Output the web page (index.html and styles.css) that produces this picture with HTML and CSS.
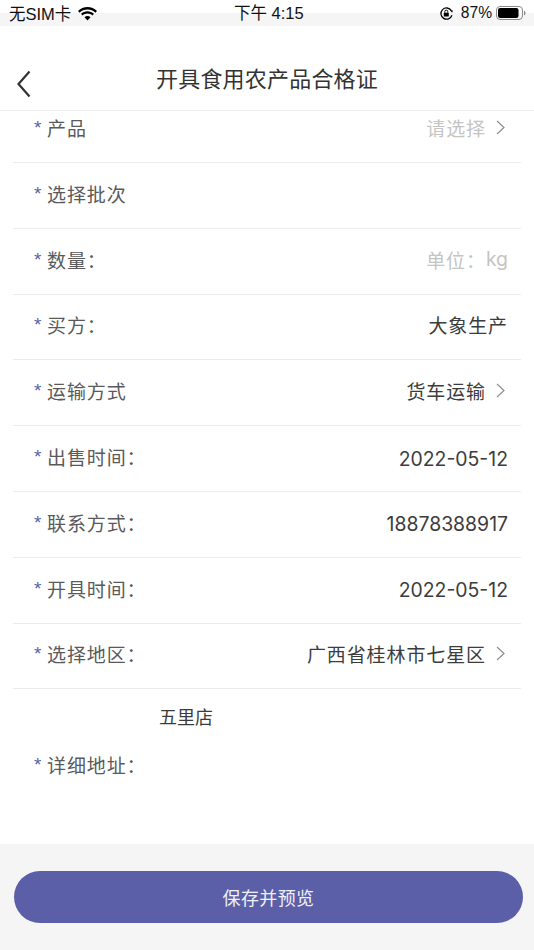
FILE: index.html
```html
<!DOCTYPE html>
<html lang="zh-CN">
<head>
  <meta charset="UTF-8">
  <meta name="viewport" content="width=device-width, initial-scale=1.0">
  <title>开具食用农产品合格证</title>
  <link rel="stylesheet" href="styles.css">
</head>
<body>
  <div class="page">
    <div class="status-bar">
      <div class="status-left">
        <span>无SIM卡</span>
        <svg class="wifi" width="21" height="15" viewBox="0 0 21 15">
          <path d="M10.5 3.6c3 0 5.8 1.1 7.9 3.1l1.6-1.7C17.4 2.500 14.100 1 10.500 1S3.600 2.500 1 5l1.600 1.700c2.100-2 4.900-3.100 7.900-3.100z" fill="#000"/>
          <path d="M10.500 7.600c1.900 0 3.600.7 4.900 1.900l1.600-1.700c-1.700-1.600-4-2.600-6.500-2.600S5.700 6.200 4 7.800l1.600 1.700c1.300-1.200 3-1.900 4.900-1.900z" fill="#000"/>
          <path d="M10.500 10c-1.200 0-2.200.4-3 1.200l3 3.300 3-3.300c-.8-.8-1.800-1.200-3-1.200z" fill="#000"/>
        </svg>
      </div>
      <div class="status-time">下午 4:15</div>
      <div class="status-right">
        <svg width="15" height="15" viewBox="0 0 15 15">
          <path d="M12.300 4.600A5.600 5.600 0 1 0 12.900 9.200" fill="none" stroke="#000" stroke-width="1.300"/>
          <path d="M11 4.200l3 .2-.9 2.300z" fill="#000"/>
          <rect x="4.800" y="6.800" width="5" height="3.800" rx=".6" fill="#000"/>
          <path d="M5.800 6.800V5.600a1.500 1.500 0 0 1 3 0v1.200" fill="none" stroke="#000"/>
        </svg>
        <span>87%</span>
        <svg width="30" height="14" viewBox="0 0 30 14">
          <rect x=".5" y=".5" width="26" height="13" rx="3.500" fill="none" stroke="#8a8a8a"/>
          <rect x="2" y="2" width="20.500" height="10" rx="2.200" fill="#000"/>
          <path d="M28 4.800c1 .3 1.500 1.100 1.500 2.200s-.5 1.900-1.500 2.200z" fill="#8a8a8a"/>
        </svg>
      </div>
    </div>

    <header class="nav">
      <svg class="back" width="14" height="28" viewBox="0 0 14 28">
        <path d="M12.500 1.500L1.500 14l11 12.500" fill="none" stroke="#333" stroke-width="2.200"/>
      </svg>
      <h1>开具食用农产品合格证</h1>
    </header>

    <main class="form">
      <div class="row row-first">
        <div class="label"><i>*</i>产品</div>
        <div class="value placeholder">请选择<svg class="chevron" width="9" height="15" viewBox="0 0 9 15"><path d="M1 1l7 6.500L1 14" fill="none" stroke="#8e8e8e" stroke-width="1.200"/></svg></div>
      </div>
      <div class="row">
        <div class="label"><i>*</i>选择批次</div>
      </div>
      <div class="row">
        <div class="label"><i>*</i>数量：</div>
        <div class="value placeholder">单位：<span class="num">kg</span></div>
      </div>
      <div class="row">
        <div class="label"><i>*</i>买方：</div>
        <div class="value">大象生产</div>
      </div>
      <div class="row">
        <div class="label"><i>*</i>运输方式</div>
        <div class="value">货车运输<svg class="chevron" width="9" height="15" viewBox="0 0 9 15"><path d="M1 1l7 6.500L1 14" fill="none" stroke="#8e8e8e" stroke-width="1.200"/></svg></div>
      </div>
      <div class="row">
        <div class="label"><i>*</i>出售时间：</div>
        <div class="value num">2022-05-12</div>
      </div>
      <div class="row">
        <div class="label"><i>*</i>联系方式：</div>
        <div class="value num">18878388917</div>
      </div>
      <div class="row">
        <div class="label"><i>*</i>开具时间：</div>
        <div class="value num">2022-05-12</div>
      </div>
      <div class="row">
        <div class="label"><i>*</i>选择地区：</div>
        <div class="value">广西省桂林市七星区<svg class="chevron" width="9" height="15" viewBox="0 0 9 15"><path d="M1 1l7 6.500L1 14" fill="none" stroke="#8e8e8e" stroke-width="1.200"/></svg></div>
      </div>
      <div class="address">
        <div class="label"><i>*</i>详细地址：</div>
        <div class="address-text">五里店</div>
      </div>
    </main>

    <footer class="footer">
      <button class="save">保存并预览</button>
    </footer>
  </div>
</body>
</html>
```

FILE: styles.css
```css
* {
  box-sizing: border-box;
}

body {
  margin: 0;
  background: #fff;
  font-family: "Liberation Sans", "Noto Sans CJK SC", sans-serif;
  color: #333;
}

.page {
  display: flex;
  flex-direction: column;
  height: 100vh;
  overflow: hidden;
}

/* status bar, grey band only starts halfway down */
.status-bar {
  position: relative;
  display: flex;
  justify-content: space-between;
  align-items: center;
  height: 26px;
  padding: 0 8px 0 9px;
  font-size: 16.500px;
  color: #111;
  background: linear-gradient(#fff 13px, #f5f5f5 13px);
}

.status-left,
.status-right {
  display: flex;
  align-items: center;
}

.wifi {
  margin-left: 6px;
}

.status-time {
  position: absolute;
  left: 234px;
  top: 0;
  line-height: 26px;
}

.status-right span {
  margin: 0 4px 0 7px;
  font-size: 15.600px;
}

.nav {
  display: flex;
  align-items: center;
  justify-content: center;
  position: relative;
  height: 85px;
  padding-top: 18px;
  border-bottom: 1px solid #eee;
}

.back {
  position: absolute;
  left: 17px;
  top: 44px;
}

.nav h1 {
  margin: 0;
  font-size: 22px;
  font-weight: 400;
  letter-spacing: .2px;
  color: #333;
}

.form {
  flex: 1;
  display: flex;
  flex-direction: column;
  margin: 0 13px;
}

.row {
  display: flex;
  justify-content: space-between;
  align-items: center;
  height: 65.800px;
  padding: 0 13px 4px 21px;
  border-bottom: 1px solid #ececec;
  font-size: 19px;
  flex-shrink: 0;
}

.row-first {
  height: 52px;
  padding-bottom: 18px;
}

.label {
  color: #5a5a5a;
  letter-spacing: .9px;
}

.label i {
  display: inline-block;
  width: 13px;
  font-style: normal;
  color: #5b5fa8;
  vertical-align: 2px;
}

.value {
  display: flex;
  align-items: center;
  letter-spacing: .9px;
  color: #3c3c3c;
}

.num {
  font-family: "Inter", sans-serif;
  font-size: 19.400px;
  letter-spacing: 0;
}

.value.num {
  padding-top: 4px;
}

.placeholder {
  color: #c4c4c4;
}

.chevron {
  margin-left: 10px;
  margin-right: 3px;
}

.address {
  flex: 1;
  display: grid;
  grid-template-columns: 125px 1fr;
  align-items: center;
  padding: 0 0 4px 21px;
  font-size: 19px;
}

.address .label {
  grid-row: 1;
  grid-column: 1;
}

.address-text {
  grid-row: 1;
  grid-column: 2;
  align-self: start;
  padding-top: 14px;
  font-size: 18px;
  color: #3c3c3c;
}

.footer {
  height: 106px;
  padding: 27px 11px 0 14px;
  background: #f5f5f5;
}

.save {
  display: block;
  width: 100%;
  height: 52px;
  border: none;
  border-radius: 26px;
  background: #5b5fa8;
  color: #f0f0f6;
  font-family: inherit;
  font-size: 18px;
  letter-spacing: .4px;
}
```
